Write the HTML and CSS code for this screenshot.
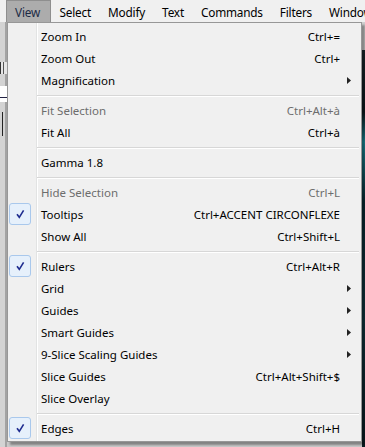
FILE: index.html
```html
<!DOCTYPE html>
<html>
  <head>
    <title>View menu</title>
    <meta charset="utf-8" />
    <link rel="stylesheet" href="styles.css">
  </head>
  <body>
    <div class="menubar">
      <div class="top open">View</div>
      <div class="top">Select</div>
      <div class="top">Modify</div>
      <div class="top">Text</div>
      <div class="top">Commands</div>
      <div class="top">Filters</div>
      <div class="top">Window</div>
    </div>
    <div class="desk">
      <div class="side-left">
        <div class="stub a"></div>
        <div class="stub b"></div>
        <div class="stub c"></div>
      </div>
      <div class="menu">
        <div class="item"><span class="label">Zoom In</span><span class="key">Ctrl+=</span></div>
        <div class="item"><span class="label">Zoom Out</span><span class="key">Ctrl+</span></div>
        <div class="item sub"><span class="label">Magnification</span><span class="key"></span></div>
        <div class="sep"></div>
        <div class="item off"><span class="label">Fit Selection</span><span class="key">Ctrl+Alt+à</span></div>
        <div class="item"><span class="label">Fit All</span><span class="key">Ctrl+à</span></div>
        <div class="sep"></div>
        <div class="item"><span class="label">Gamma 1.8</span><span class="key"></span></div>
        <div class="sep"></div>
        <div class="item off"><span class="label">Hide Selection</span><span class="key">Ctrl+L</span></div>
        <div class="item checked"><span class="label">Tooltips</span><span class="key">Ctrl+ACCENT CIRCONFLEXE</span></div>
        <div class="item"><span class="label">Show All</span><span class="key">Ctrl+Shift+L</span></div>
        <div class="sep"></div>
        <div class="item checked"><span class="label">Rulers</span><span class="key">Ctrl+Alt+R</span></div>
        <div class="item sub"><span class="label">Grid</span><span class="key"></span></div>
        <div class="item sub"><span class="label">Guides</span><span class="key"></span></div>
        <div class="item sub"><span class="label">Smart Guides</span><span class="key"></span></div>
        <div class="item sub"><span class="label">9-Slice Scaling Guides</span><span class="key"></span></div>
        <div class="item"><span class="label">Slice Guides</span><span class="key">Ctrl+Alt+Shift+$</span></div>
        <div class="item"><span class="label">Slice Overlay</span><span class="key"></span></div>
        <div class="sep"></div>
        <div class="item checked"><span class="label">Edges</span><span class="key">Ctrl+H</span></div>
      </div>
      <div class="side-right"></div>
    </div>
    <script>
      // check boxes and submenu arrows
      const tick = '<svg width="10" height="10" viewBox="0 0 10 10"><path d="M2 5.2 L4.3 8.3 L8.6 1.4" fill="none" stroke="#1f2c8f" stroke-width="1.6"/></svg>';
      for (const e of document.querySelectorAll('.item')) {
        const icon = document.createElement('span');
        icon.className = 'icon';
        if (e.classList.contains('checked')) icon.innerHTML = '<span class="box">' + tick + '</span>';
        e.prepend(icon);
        const arrow = document.createElement('span');
        arrow.className = 'arrow';
        if (e.classList.contains('sub')) arrow.innerHTML = '<svg width="4" height="7" viewBox="0 0 4 7"><path d="M0 0 L4 3.5 L0 7 Z" fill="#222"/></svg>';
        e.append(arrow);
      }
    </script>
  </body>
</html>
```

FILE: styles.css
```css
html,
body {
  margin: 0;
  padding: 0;
  height: 100%;
  overflow: hidden;
  font: 11.5px "Noto Sans", "Open Sans", sans-serif;
  color: #000;
  background: #c9c9c9;
}
.menubar {
  display: flex;
  height: 22px;
  padding: 0 0 0 6px;
  background: #f0f0f0;
  white-space: nowrap;
  overflow: hidden;
  font-size: 11.8px;
  letter-spacing: -0.2px;
}
.top {
  padding: 3px 8.5px 0;
  line-height: 18px;
}
.top.open {
  padding: 2px 10px 0 8px;
  background: #acacac;
  border: 1px solid #8e8e8e;
  border-bottom: 0;
  color: #1c2b45;
}
.desk {
  display: flex;
  height: 425px;
}
.side-left {
  width: 7px;
  background: linear-gradient(to right, #d3d3d3 5px, #a3a3a3 5px);
  overflow: hidden;
}
.stub.a {
  margin-top: 40px;
  height: 12px;
  background: linear-gradient(to right, #333 1px, #e6e6e6 1px, #e6e6e6 3px, #555 3px, #555 4px, #e6e6e6 4px);
}
.stub.b {
  margin-top: 12px;
  height: 16px;
  background: linear-gradient(#fff 11px, #224 11px, #224 12px, #fff 12px);
}
.stub.c {
  margin: 10px 0 0 2px;
  width: 1px;
  height: 24px;
  background: #222;
}
.menu {
  position: relative;
  z-index: 1;
  width: 355px;
  height: 420px;
  box-sizing: border-box;
  border: 1px solid #979797;
  padding: 2px 2px 2px 1px;
  background: linear-gradient(to right, transparent 28px, #e2e3e3 28px, #e2e3e3 29px, #fff 29px, #fff 30px, transparent 30px)
    #f0f0f0;
  box-shadow: 3px 3px 2px rgba(0, 0, 0, 0.35);
}
.side-right {
  flex: 1;
  background: linear-gradient(to bottom, #cfcfcf 0, #cfcfcf 28px, #1d2a2e 28px, #0e1a1e 90px, #1c8c9a 120px, #0b2a33 180px, #13363f 300px, #0c1c22);
}
.item {
  display: flex;
  align-items: center;
  height: 22px;
  white-space: nowrap;
}
.item.off {
  color: #6d6d6d;
}
.icon {
  width: 32px;
  height: 22px;
  flex: none;
}
.box {
  display: flex;
  align-items: center;
  justify-content: center;
  width: 20px;
  height: 20px;
  border: 1px solid #a9c8ec;
  border-radius: 3px;
  background: #e6f0fb;
}
.label {
  flex: 1;
}
.key {
  text-align: right;
}
.arrow {
  display: flex;
  width: 19px;
  padding-left: 7px;
  box-sizing: border-box;
  flex: none;
}
.sep {
  height: 8px;
  margin-left: 28px;
  box-sizing: border-box;
  border-top: 4px solid transparent;
  background: linear-gradient(#d7d7d7 1px, #fff 1px, #fff 2px, transparent 2px) no-repeat;
  background-origin: padding-box;
}
```
